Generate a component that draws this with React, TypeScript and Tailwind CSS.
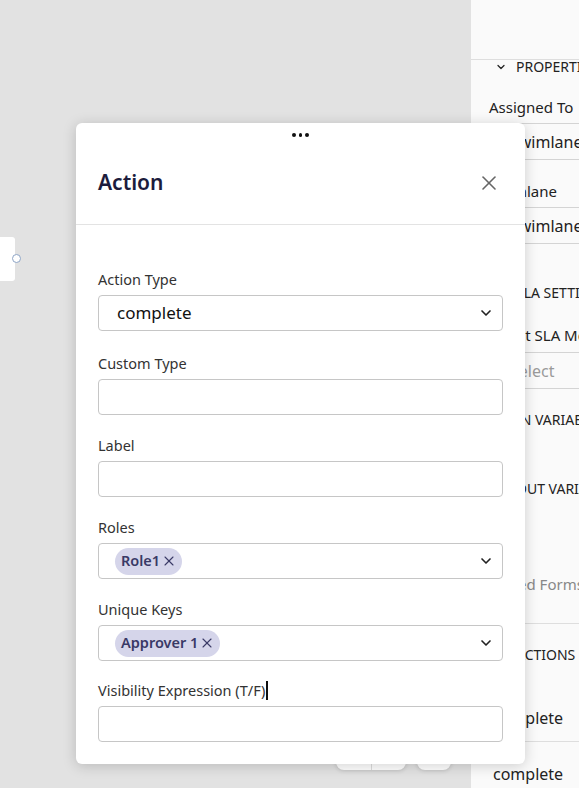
import { X, ChevronDown } from "lucide-react";

const font = { fontFamily: '"Noto Sans", "Open Sans", sans-serif' };

const Field = ({ label, className, children }: { label: React.ReactNode; className?: string; children: React.ReactNode }) => (
  <div className={"flex flex-col " + (className ?? "")}>
    <label className="flex h-[20px] items-center text-[14.5px] leading-[20px] text-[#333]">{label}</label>
    <div className="mt-[6px]">{children}</div>
  </div>
);

const TextBox = () => (
  <div className="h-[36px] rounded-[4px] border border-[#c6c6c6] bg-white" />
);

const SelectBox = ({ children }: { children?: React.ReactNode }) => (
  <div className="flex h-[36px] items-center rounded-[4px] border border-[#c6c6c6] bg-white pr-[8px]">
    <div className="flex flex-1 items-center">{children}</div>
    <ChevronDown size={16} strokeWidth={2.5} className="shrink-0 text-[#222]" />
  </div>
);

const Chip = ({ text }: { text: string }) => (
  <span className="ml-[16px] flex h-[27px] items-center rounded-full bg-[#d5d5ea] pl-[6px] pr-[5px] text-[14.5px] font-semibold text-[#393966]">
    {text}
    <X size={16} strokeWidth={1.6} className="ml-[1px]" />
  </span>
);

const PanelHeader = ({ text, className }: { text: string; className?: string }) => (
  <div className={"flex h-[14px] items-center gap-[9px] pl-[24px] text-[14px] leading-[14px] text-[#222] whitespace-nowrap " + (className ?? "")}>
    <ChevronDown size={12} strokeWidth={2.5} className="shrink-0" />
    {text}
  </div>
);

const PanelLabel = ({ text, className }: { text: string; className?: string }) => (
  <div className={"h-[20px] pl-[18px] text-[15px] leading-[20px] whitespace-nowrap " + (className ?? "text-[#222]")}>{text}</div>
);

const PanelInput = ({ text, muted, className }: { text: string; muted?: boolean; className?: string }) => (
  <div
    className={
      "ml-[18px] flex h-[37px] items-center border-y border-[#d4d4d4] pl-[21px] text-[16px] whitespace-nowrap " +
      (muted ? "text-[#9a9a9a] " : "text-[#222] ") +
      (className ?? "")
    }
  >
    {text}
  </div>
);

const RightPanel = () => (
  <div className="w-[108px] shrink-0 overflow-hidden bg-[#fafafa] shadow-[-3px_0_8px_rgba(0,0,0,0.08)]">
    <div className="h-[60px] border-b border-[#dedede]" />
    <PanelHeader text="PROPERTIES" />
    <PanelLabel text="Assigned To" className="mt-[23px] text-[#222]" />
    <PanelInput text="Swimlane" className="mt-[6px]" />
    <PanelLabel text="Swimlane" className="mt-[21px] text-[#222]" />
    <PanelInput text="Swimlane" className="mt-[6px]" />
    <PanelHeader text="SLA SETTINGS" className="mt-[42px]" />
    <PanelLabel text="Select SLA Model" className="mt-[25px] text-[#222]" />
    <PanelInput text="Select" muted className="mt-[7px]" />
    <PanelHeader text="IN VARIABLES" className="mt-[24px]" />
    <PanelHeader text="OUT VARIABLES" className="mt-[55px]" />
    <PanelLabel text="Linked Forms" className="mt-[78px] text-[#888]" />
    <div className="mt-[29px] border-t border-[#dedede]" />
    <PanelHeader text="ACTIONS" className="mt-[24px]" />
    <div className="mt-[33px] h-[47px] border-b border-[#dedede] pl-[22px] pt-[13px] text-[16px] leading-[20px] text-[#222]">complete</div>
    <div className="h-[47px] border-b border-[#cfcfcf] pl-[22px] pt-[22px] text-[16px] leading-[20px] text-[#222]">complete</div>
  </div>
);

const Canvas = () => (
  <div className="relative flex-1 bg-[#e2e2e2]">
    {/* node stub */}
    <div className="absolute left-0 top-[237px] h-[44px] w-[15px] rounded-r-[3px] bg-white" />
    <div className="absolute left-[12px] top-[254px] h-[9px] w-[9px] rounded-full border border-[#8ea5c6] bg-white" />
    {/* zoom controls */}
    <div className="absolute left-[336px] top-[738px] flex h-[32px] overflow-hidden rounded-[8px] bg-white shadow-[0_1px_4px_rgba(0,0,0,0.15)]">
      <div className="w-[36px] border-r border-[#ddd]" />
      <div className="w-[34px]" />
    </div>
    <div className="absolute left-[417px] top-[738px] h-[32px] w-[34px] rounded-[8px] bg-white shadow-[0_1px_4px_rgba(0,0,0,0.15)]" />
  </div>
);

const ActionModal = () => (
  <div className="absolute left-[76px] top-[123px] flex w-[449px] flex-col rounded-[6px] bg-white shadow-[0_2px_14px_rgba(0,0,0,0.18)]">
    <div className="flex h-[22px] justify-center gap-[3px] pt-[10px]">
      <span className="h-[3.5px] w-[3.5px] rounded-full bg-[#111]" />
      <span className="h-[3.5px] w-[3.5px] rounded-full bg-[#111]" />
      <span className="h-[3.5px] w-[3.5px] rounded-full bg-[#111]" />
    </div>
    <div className="flex h-[80px] items-center justify-between border-b border-[#e3e3e3] pb-[4px] pl-[22px] pr-[24px]">
      <h2 className="text-[21px] font-semibold text-[#1c1c3c]">Action</h2>
      <X size={24} strokeWidth={1.6} className="text-[#666]" />
    </div>
    <div className="flex flex-col px-[22px] pb-[22px] pt-[44px]">
      <Field label="Action Type">
        <SelectBox>
          <span className="pl-[18px] text-[17px] text-[#111]">complete</span>
        </SelectBox>
      </Field>
      <Field label="Custom Type" className="mt-[22px]">
        <TextBox />
      </Field>
      <Field label="Label" className="mt-[20px]">
        <TextBox />
      </Field>
      <Field label="Roles" className="mt-[20px]">
        <SelectBox>
          <Chip text="Role1" />
        </SelectBox>
      </Field>
      <Field label="Unique Keys" className="mt-[20px]">
        <SelectBox>
          <Chip text="Approver 1" />
        </SelectBox>
      </Field>
      <Field
        className="mt-[19px]"
        label={
          <>
            Visibility Expression (T/F)
            <span className="ml-[1px] inline-block h-[19px] w-[2px] bg-[#111]" />
          </>
        }
      >
        <TextBox />
      </Field>
    </div>
  </div>
);

export default function App() {
  return (
    <div className="relative flex h-[788px] w-[579px] overflow-hidden" style={font}>
      <Canvas />
      <RightPanel />
      <ActionModal />
    </div>
  );
}
